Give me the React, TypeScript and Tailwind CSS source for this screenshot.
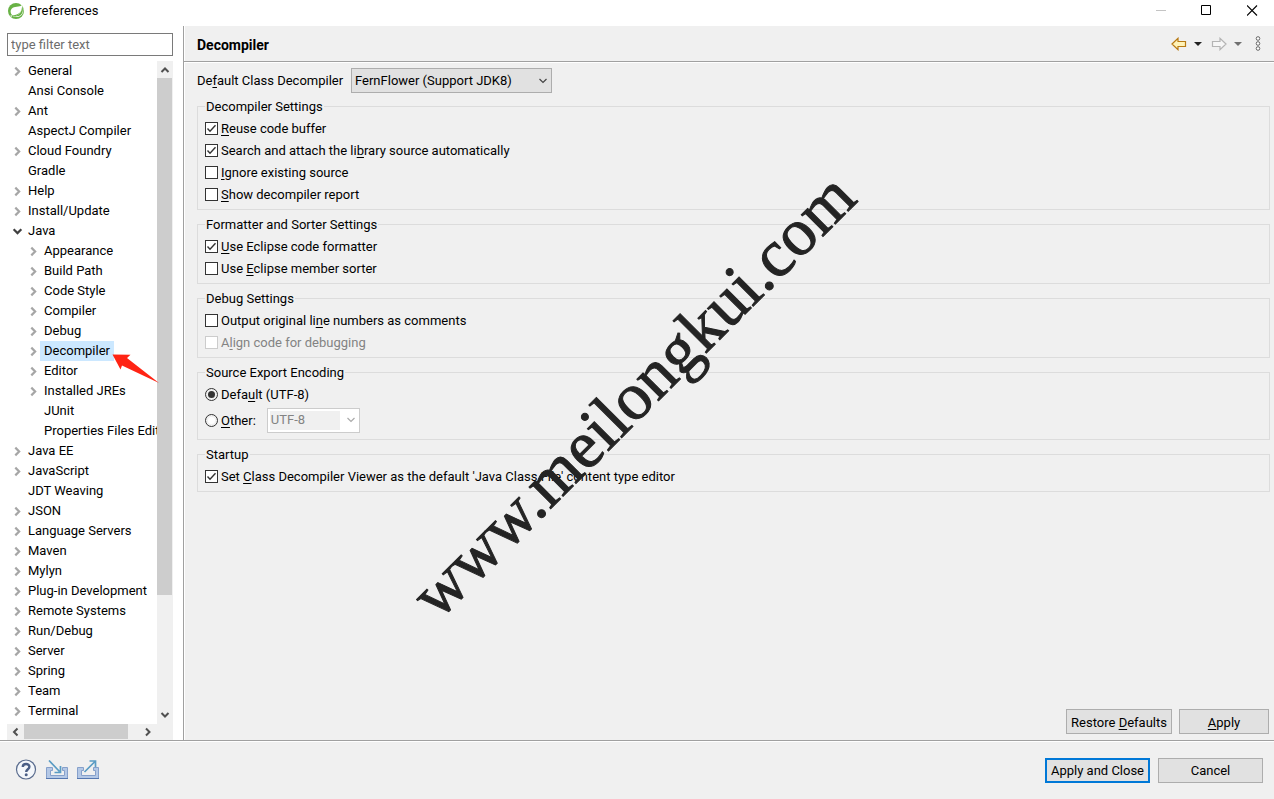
import { useState } from 'react';
import type { ReactNode } from 'react';

type TreeNode = {
  label: string;
  expandable?: boolean;
  children?: TreeNode[];
};

const TREE: TreeNode[] = [
  { label: 'General', expandable: true },
  { label: 'Ansi Console' },
  { label: 'Ant', expandable: true },
  { label: 'AspectJ Compiler' },
  { label: 'Cloud Foundry', expandable: true },
  { label: 'Gradle' },
  { label: 'Help', expandable: true },
  { label: 'Install/Update', expandable: true },
  {
    label: 'Java',
    expandable: true,
    children: [
      { label: 'Appearance', expandable: true },
      { label: 'Build Path', expandable: true },
      { label: 'Code Style', expandable: true },
      { label: 'Compiler', expandable: true },
      { label: 'Debug', expandable: true },
      { label: 'Decompiler', expandable: true },
      { label: 'Editor', expandable: true },
      { label: 'Installed JREs', expandable: true },
      { label: 'JUnit' },
      { label: 'Properties Files Editor' },
    ],
  },
  { label: 'Java EE', expandable: true },
  { label: 'JavaScript', expandable: true },
  { label: 'JDT Weaving' },
  { label: 'JSON', expandable: true },
  { label: 'Language Servers', expandable: true },
  { label: 'Maven', expandable: true },
  { label: 'Mylyn', expandable: true },
  { label: 'Plug-in Development', expandable: true },
  { label: 'Remote Systems', expandable: true },
  { label: 'Run/Debug', expandable: true },
  { label: 'Server', expandable: true },
  { label: 'Spring', expandable: true },
  { label: 'Team', expandable: true },
  { label: 'Terminal', expandable: true },
];

// Underlines the first "&x" pair of a label, as in a native mnemonic
function Mnemonic({ text }: { text: string }) {
  const at = text.indexOf('&');
  if (at < 0) return <>{text}</>;
  return (
    <>
      {text.slice(0, at)}
      <span className="underline underline-offset-2">{text[at + 1]}</span>
      {text.slice(at + 2)}
    </>
  );
}

function Chevron({ className, d, width = 2 }: { className: string; d: string; width?: number }) {
  return (
    <svg viewBox="0 0 10 10" className={className} fill="none" stroke="currentColor" strokeWidth={width}>
      <path d={d} />
    </svg>
  );
}

const UP = 'M1.5 7 5 3.5 8.5 7';
const DOWN = 'M1.5 3 5 6.5 8.5 3';
const LEFT = 'M6.5 1.5 3 5 6.5 8.5';
const RIGHT = 'M3 1.5 6.5 5 3 8.5';

function TreeItem({ node, nested, selected, onSelect }: { node: TreeNode; nested?: boolean; selected: string; onSelect: (label: string) => void }) {
  const [open, setOpen] = useState(true);
  const active = selected === node.label;
  return (
    <li>
      <div className={`flex h-5 items-center ${nested ? 'pl-[21px]' : 'pl-[5px]'}`}>
        {node.expandable ? (
          <button aria-label={`Toggle ${node.label}`} onClick={() => setOpen(!open)} className="h-5 w-3 shrink-0">
            {node.children && open ? (
              <Chevron className="size-[11px] text-[#404040]" d={DOWN} />
            ) : (
              <Chevron className="size-[11px] text-[#a6a6a6]" d={RIGHT} />
            )}
          </button>
        ) : (
          <span className="w-3 shrink-0" />
        )}
        <button
          onClick={() => onSelect(node.label)}
          className={`h-5 px-1 whitespace-nowrap ${active ? 'bg-[#cce8ff]' : ''}`}
        >
          {node.label}
        </button>
      </div>
      {node.children && open && (
        <ul>
          {node.children.map((child) => (
            <TreeItem key={child.label} node={child} nested selected={selected} onSelect={onSelect} />
          ))}
        </ul>
      )}
    </li>
  );
}

function Group({ title, children }: { title: string; children: ReactNode }) {
  return (
    <fieldset className="border border-[#dcdcdc] pt-px pb-1 pl-[7px]">
      <legend className="h-5 px-px leading-[22px]">{title}</legend>
      {children}
    </fieldset>
  );
}

function Check({ label, checked, disabled }: { label: string; checked?: boolean; disabled?: boolean }) {
  return (
    <label className={`flex h-[22px] w-fit items-center gap-[3px] ${disabled ? 'text-[#838383]' : ''}`}>
      <span className="grid size-[13px]">
        <input
          type="checkbox"
          defaultChecked={checked}
          disabled={disabled}
          className="peer col-start-1 row-start-1 size-[13px] appearance-none border border-[#333] bg-white disabled:border-[#ccc]"
        />
        <svg viewBox="0 0 13 13" className="pointer-events-none invisible col-start-1 row-start-1 size-[13px] peer-checked:visible" fill="none" stroke="#333" strokeWidth="1.4">
          <path d="M2.5 6.5 5 9.2 10.5 3.2" />
        </svg>
      </span>
      <span className="pt-0.5">
        <Mnemonic text={label} />
      </span>
    </label>
  );
}

function Radio({ label, checked }: { label: string; checked?: boolean }) {
  return (
    <label className="flex h-[22px] w-fit items-center gap-[3px]">
      <input
        type="radio"
        name="encoding"
        defaultChecked={checked}
        className="size-[13px] appearance-none rounded-full border border-[#333] bg-white bg-clip-content p-0.5 checked:bg-[#333]"
      />
      <span className="pt-0.5">
        <Mnemonic text={label} />
      </span>
    </label>
  );
}

function PushButton({ label, className }: { label: string; className: string }) {
  return (
    <button className={`h-[25px] bg-[#e1e1e1] pt-0.5 whitespace-nowrap ${className}`}>
      <Mnemonic text={label} />
    </button>
  );
}

function SpringLogo() {
  return (
    <svg viewBox="0 0 16 16" className="size-4">
      <circle cx="8" cy="8" r="8" fill="#68b245" />
      <path d="M14.500 1.200c-1 1.700-2.300 2.100-4.200 2.200C6 3.700 2.600 5 2.600 8.600c0 1.900 1 3.300 2 3.900 3.400-.2 6.500-1.300 8.500-4.400-1.400 3.600-4.600 5.400-8.700 5.700 3.700.7 7.900.4 9.800-2.500 1.800-2.900 1.300-7 .3-10.100z" fill="#fff" />
      <path d="M14.300 2.600c.9 3 1 6.300-.7 8.500-1.700 2.200-4.800 2.700-8.200 2.400 3.900-.4 7-2.400 8-5.900z" fill="#68b245" />
      <circle cx="3.200" cy="13" r=".8" fill="#fff" />
    </svg>
  );
}

function TitleBar() {
  return (
    <header className="flex h-[26px] shrink-0 items-start bg-white pl-2">
      <div className="flex h-[21px] items-center gap-[5px]">
        <SpringLogo />
        <h1>Preferences</h1>
      </div>
      <div className="ml-auto flex h-[21px] items-center gap-[35px] pr-4">
        <button aria-label="Minimize">
          <svg viewBox="0 0 11 11" className="size-[11px]" stroke="#c4c4c4">
            <path d="M1 5.500h10" />
          </svg>
        </button>
        <button aria-label="Maximize">
          <svg viewBox="0 0 11 11" className="size-[11px]" fill="none" stroke="#000">
            <path d="M.5.500h9v9h-9z" />
          </svg>
        </button>
        <button aria-label="Close">
          <svg viewBox="0 0 11 11" className="size-[11px]" stroke="#000" strokeWidth="1.100">
            <path d="m0 .500 10 10m0-10-10 10" />
          </svg>
        </button>
      </div>
    </header>
  );
}

function Sidebar() {
  const [selected, setSelected] = useState('Decompiler');
  return (
    <aside className="flex w-[183px] shrink-0 flex-col bg-white pt-[7px] pr-[10px] pl-[7px]">
      <input
        aria-label="Filter"
        placeholder="type filter text"
        className="h-[23px] w-full shrink-0 border border-[#7a7a7a] px-[3px] outline-none placeholder:text-[#6d6d6d]"
      />
      <div className="mt-[5px] flex min-h-0 flex-1">
        <ul className="min-w-0 flex-1 overflow-hidden">
          {TREE.map((node) => (
            <TreeItem key={node.label} node={node} selected={selected} onSelect={setSelected} />
          ))}
        </ul>
        <div className="flex w-4 shrink-0 flex-col bg-[#f0f0f0] pr-px text-[#505050]">
          <button aria-label="Scroll up" className="grid h-[17px] shrink-0 place-items-center">
            <Chevron className="size-[10px]" d={UP} />
          </button>
          <div className="flex-1">
            <div className="h-[82.5%] bg-[#cdcdcd]" />
          </div>
          <button aria-label="Scroll down" className="grid h-[19px] shrink-0 place-items-center">
            <Chevron className="size-[10px]" d={DOWN} />
          </button>
        </div>
      </div>
      <div className="flex h-4 shrink-0 bg-[#f0f0f0] pr-[17px] text-[#505050]">
        <button aria-label="Scroll left" className="grid w-[17px] place-items-center">
          <Chevron className="size-[10px]" d={LEFT} />
        </button>
        <div className="flex-1">
          <div className="h-[15px] w-[90%] bg-[#cdcdcd]" />
        </div>
        <button aria-label="Scroll right" className="grid w-[17px] place-items-center">
          <Chevron className="size-[10px]" d={RIGHT} />
        </button>
      </div>
    </aside>
  );
}

function PageHeader() {
  return (
    <div className="flex h-9 shrink-0 items-center border-b border-[#a0a0a0] pr-3 pl-[13px]">
      <h2 className="pt-0.5 text-[14px] font-bold">Decompiler</h2>
      <div className="ml-auto flex items-center">
        <button aria-label="Back">
          <svg viewBox="0 0 16 14" className="h-[14px] w-4" fill="#fff3b8" stroke="#b87a14" strokeWidth="1.200">
            <path d="M1 7 7 1.300V4.500h7.500v5H7v3.200z" />
          </svg>
        </button>
        <button aria-label="Back history" className="ml-[7px]">
          <svg viewBox="0 0 8 4" className="h-1 w-2" fill="#222">
            <path d="M0 0h8L4 4z" />
          </svg>
        </button>
        <button aria-label="Forward" className="ml-[9px]">
          <svg viewBox="0 0 16 14" className="h-[14px] w-4" fill="#f6f6f6" stroke="#b4b4b4" strokeWidth="1.200">
            <path d="M15 7 9 1.300V4.500H1.500v5H9v3.200z" />
          </svg>
        </button>
        <button aria-label="Forward history" className="ml-[7px]">
          <svg viewBox="0 0 8 4" className="h-1 w-2" fill="#707070">
            <path d="M0 0h8L4 4z" />
          </svg>
        </button>
        <button aria-label="View menu" className="ml-3">
          <svg viewBox="0 0 8 15" className="h-[15px] w-2" fill="#fff" stroke="#666">
            <circle cx="4" cy="2.500" r="1.800" />
            <circle cx="4" cy="7.500" r="1.800" />
            <circle cx="4" cy="12.500" r="1.800" />
          </svg>
        </button>
      </div>
    </div>
  );
}

function DecompilerPage() {
  return (
    <div className="flex min-h-0 flex-1 flex-col border-t border-white pt-[5px] pr-1 pb-[6px] pl-[13px]">
      <div className="flex h-[25px] items-center gap-2">
        <label htmlFor="decompiler" className="w-[146px] whitespace-nowrap">
          <Mnemonic text="De&fault Class Decompiler" />
        </label>
        <div className="grid w-[201px] items-center">
          <select id="decompiler" className="col-start-1 row-start-1 h-[25px] appearance-none border border-[#adadad] bg-[#e1e1e1] pl-[3px]">
            <option>FernFlower (Support JDK8)</option>
          </select>
          <Chevron className="pointer-events-none col-start-1 row-start-1 mr-1 size-[10px] justify-self-end text-[#444]" d={DOWN} width={1.2} />
        </div>
      </div>
      <div className="mt-[3px] flex flex-col gap-1">
        <Group title="Decompiler Settings">
          <Check label="&Reuse code buffer" checked />
          <Check label="Search and attach the li&brary source automatically" checked />
          <Check label="&Ignore existing source" />
          <Check label="&Show decompiler report" />
        </Group>
        <Group title="Formatter and Sorter Settings">
          <Check label="&Use Eclipse code formatter" checked />
          <Check label="Use &Eclipse member sorter" />
        </Group>
        <Group title="Debug Settings">
          <Check label="Output original li&ne numbers as comments" />
          <Check label="A&lign code for debugging" disabled />
        </Group>
        <Group title="Source Export Encoding">
          <Radio label="Defa&ult (UTF-8)" checked />
          <div className="flex h-[30px] items-center gap-[11px]">
            <Radio label="&Other:" />
            <div className="flex h-[25px] w-[93px] items-center justify-between border border-[#ccc] bg-white p-0.5">
              <select aria-label="Other encoding" disabled className="h-[19px] w-[70px] appearance-none bg-[#f0f0f0] pl-px text-[#838383]">
                <option>UTF-8</option>
              </select>
              <Chevron className="mr-px size-[10px] text-[#aaa]" d={DOWN} width={1.2} />
            </div>
          </div>
        </Group>
        <Group title="Startup">
          <Check label="Set &Class Decompiler Viewer as the default 'Java Class File' content type editor" checked />
        </Group>
      </div>
      <div className="mt-auto flex justify-end gap-[7px] pr-px">
        <PushButton label="Restore &Defaults" className="w-[106px] border border-[#adadad]" />
        <PushButton label="&Apply" className="w-[90px] border border-[#adadad]" />
      </div>
    </div>
  );
}

function Tray({ arrow, label }: { arrow: string; label: string }) {
  return (
    <button aria-label={label}>
      <svg viewBox="0 0 22 20" className="h-5 w-[22px]" fill="none">
        <path d="M6.500 7.500h-6v11h21v-11h-5v3h2v5h-14v-5h2z" fill="#b4c8e6" stroke="#86a0cb" />
        <path d="M0 18.500h22" stroke="#5577b0" />
        <path d={arrow} stroke="#5a9cc4" strokeWidth="1.700" />
      </svg>
    </button>
  );
}

function Footer() {
  return (
    <footer className="flex h-[59px] shrink-0 items-center border-t border-[#a0a0a0] pr-[11px] pl-[15px] shadow-[inset_0_1px_0_#fff]">
      <div className="flex items-center gap-[9px]">
        <button aria-label="Help">
          <svg viewBox="0 0 22 22" className="size-[22px]">
            <circle cx="11" cy="10.500" r="9.500" fill="#f4f7fb" stroke="#5a6c8e" strokeWidth="1.200" />
            <path d="M7.800 8c0-4 6.600-3.900 6.600-.2 0 2.400-3.200 2.500-3.200 5.200" fill="none" stroke="#4b5f86" strokeWidth="2.400" />
            <circle cx="11.200" cy="15.800" r="1.500" fill="#4b5f86" />
          </svg>
        </button>
        <Tray label="Import" arrow="M3 .500 13.500 11.500M14.500 6v6.500H8.500" />
        <Tray label="Export" arrow="M7.500 12 18 1.500M12.500 1H18.500V7" />
      </div>
      <div className="ml-auto flex gap-2">
        <PushButton label="Apply and Close" className="w-[105px] border-2 border-[#0078d7]" />
        <PushButton label="Cancel" className="w-[105px] border border-[#adadad]" />
      </div>
    </footer>
  );
}

export default function App() {
  return (
    <div className="relative flex h-screen flex-col overflow-hidden bg-[#f0f0f0] font-[Roboto,sans-serif] text-[13px] leading-4 text-black select-none">
      <TitleBar />
      <div className="flex min-h-0 flex-1">
        <Sidebar />
        <main className="flex min-w-0 flex-1 flex-col border-l border-[#a0a0a0] shadow-[inset_1px_0_0_#fff]">
          <PageHeader />
          <DecompilerPage />
        </main>
      </div>
      <Footer />

      {/* Pointer over the selected tree entry */}
      <svg viewBox="0 0 48 30" className="pointer-events-none absolute top-[354px] left-[112px] h-[30px] w-12">
        <path d="M.5.500 18.500.800 15 4 47 29 10 11.500 8.500 15.500z" fill="#ff2414" />
      </svg>

      {/* Site watermark */}
      <div className="pointer-events-none absolute top-[562px] left-[446px] origin-bottom-left -rotate-45 font-['Liberation_Serif',serif] text-[67px] leading-none whitespace-nowrap text-[#242424] [-webkit-text-stroke:1px_#242424]">
        www.meilongkui.com
      </div>
    </div>
  );
}
